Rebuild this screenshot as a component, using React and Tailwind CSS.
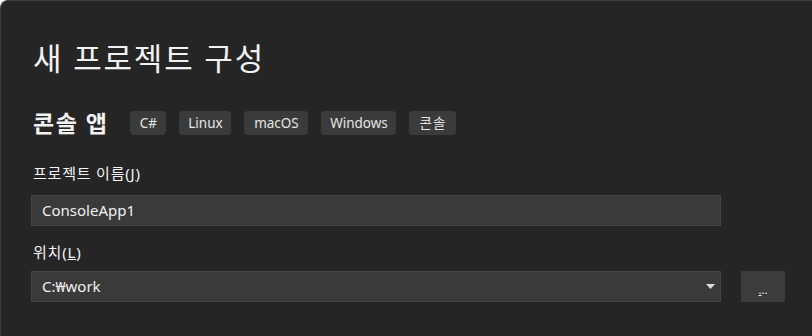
import React from "react";

const font = { fontFamily: '"Noto Sans", "Noto Sans CJK KR", sans-serif' };

function Tag({ children, className = "" }) {
  return (
    <div className={"h-[24px] px-[9px] rounded-[4px] bg-[#3b3b3b] text-[#e6e6e6] text-[13.5px] leading-[24px] flex items-center " + className}>
      {children}
    </div>
  );
}

export default function App() {
  return (
    <div
      className="w-[812px] h-[336px] bg-[#252525] border-t border-l border-[#3e3e3e] rounded-tl-[8px] overflow-hidden text-[#f2f2f2]"
      style={font}
    >
      <div className="pl-[30px] pt-[37px] flex flex-col">
        <div className="h-[40px] leading-[40px] text-[31px] tracking-[1.8px] pl-[2px]">새 프로젝트 구성</div>
        <div className="mt-[33px] h-[24px] flex items-center">
          <div className="text-[23px] font-bold leading-[24px] tracking-[1.5px] pl-[2px] mr-[22px]">콘솔 앱</div>
          <div className="flex gap-[13px]">
            <Tag className="w-[36px] justify-center px-0">C#</Tag>
            <Tag className="w-[52px] justify-center px-0">Linux</Tag>
            <Tag className="w-[64px] justify-center px-0">macOS</Tag>
            <Tag className="w-[75px] justify-center px-0">Windows</Tag>
            <Tag className="w-[47px] justify-center px-0 tracking-[1px]">콘솔</Tag>
          </div>
        </div>
        <div className="mt-[28px] h-[20px] leading-[20px] text-[15px] tracking-[0.8px] pl-[2px]">
          프로젝트 이름(<span className="underline">J</span>)
        </div>
        <div className="mt-[12px] w-[690px] h-[31px] bg-[#3a3a3a] border border-[#444444] flex items-center pl-[10px] text-[15px] text-[#f0f0f0]">
          ConsoleApp1
        </div>
        <div className="mt-[16px] h-[20px] leading-[20px] text-[15px] tracking-[0.8px] pl-[2px]">
          위치(<span className="underline">L</span>)
        </div>
        <div className="mt-[9px] flex items-center gap-[20px]">
          <div className="w-[690px] h-[31px] bg-[#3a3a3a] border border-[#444444] flex items-center justify-between pl-[10px] pr-[5px] text-[15px] text-[#f0f0f0]">
            <span>C:₩work</span>
            <svg width="9" height="5" viewBox="0 0 9 5">
              <path d="M0 0 H9 L4.5 5 Z" fill="#dcdcdc" />
            </svg>
          </div>
          <div className="w-[44px] h-[31px] bg-[#3c3c3c] flex items-end justify-center pb-[6px] text-[11px] leading-[12px] text-[#f0f0f0]">
            <span>
              <span className="underline">.</span>..
            </span>
          </div>
        </div>
      </div>
    </div>
  );
}
